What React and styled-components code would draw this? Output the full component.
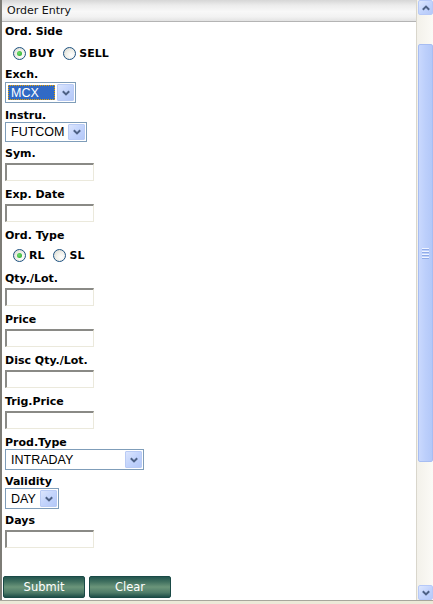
import React from "react";
import styled, { createGlobalStyle } from "styled-components";

const Global = createGlobalStyle`
  html, body { margin: 0; padding: 0; background: #fff; }
  body { font-family: "DejaVu Sans", Verdana, sans-serif; }
`;

const Frame = styled.div`
  width: 433px;
  height: 604px;
  display: flex;
  flex-direction: column;
  overflow: hidden;
  background: #ece9d8;
`;

const Body = styled.div`
  height: 600px;
  display: flex;
  flex-direction: row;
  border-bottom: 1px solid #a7a69c;
  background: #fff;
`;

const Panel = styled.div`
  flex: 1;
  display: flex;
  flex-direction: column;
  border-left: 2px solid #7d7c76;
  border-right: 1px solid #d9d6cc;
`;

const Header = styled.div`
  height: 21px;
  border-bottom: 1px solid #b4b4b4;
  background: linear-gradient(#d6d6d6 0%, #ececec 25%, #f8f8f8 55%, #f2f2f2 80%, #e3e3e3 100%);
  font-family: "DejaVu Sans", Verdana, sans-serif;
  font-size: 11px;
  line-height: 21px;
  color: #111;
  padding-left: 5px;
`;

const Form = styled.div`
  display: flex;
  flex-direction: column;
  align-items: flex-start;
  padding-left: 3px;
`;

const Label = styled.div`
  font-family: "DejaVu Sans", Verdana, sans-serif;
  font-weight: bold;
  font-size: 11px;
  line-height: 15px;
  height: 14px;
  color: #000;
  margin-top: ${(p) => p.$mt ?? 6}px;
`;

const RadioRow = styled.div`
  display: flex;
  align-items: center;
  height: 14px;
  margin-top: ${(p) => p.$mt ?? 8}px;
  padding-left: 8px;
  gap: 9px;
`;

const RadioItem = styled.div`
  display: flex;
  align-items: center;
  gap: 3px;
  font-family: "DejaVu Sans", Verdana, sans-serif;
  font-weight: bold;
  font-size: 11px;
  color: #000;
`;

const RadioCircle = styled.span`
  width: 11px;
  height: 11px;
  border-radius: 50%;
  border: 1px solid #1c5180;
  background: radial-gradient(circle at 65% 65%, #ffffff 0%, #f0f0ea 45%, #d4d4cc 100%);
  display: flex;
  align-items: center;
  justify-content: center;
`;

const RadioDot = styled.span`
  width: 5px;
  height: 5px;
  border-radius: 50%;
  background: radial-gradient(circle at 40% 40%, #6fe06f, #21a121);
`;

const Radio = ({ checked, children }) => (
  <RadioItem>
    <RadioCircle>{checked && <RadioDot />}</RadioCircle>
    {children}
  </RadioItem>
);

const SelectBox = styled.div`
  box-sizing: border-box;
  width: ${(p) => p.$w}px;
  height: ${(p) => p.$h ?? 21}px;
  margin-top: ${(p) => p.$mt ?? 0}px;
  border: 1px solid #7f9db9;
  background: #fff;
  display: flex;
  align-items: stretch;
  padding: 1px;
`;

const SelectValue = styled.div`
  flex: 1;
  display: flex;
  align-items: center;
  font-family: "Liberation Sans", Arial, sans-serif;
  font-size: 12.5px;
  color: ${(p) => (p.$focus ? "#fff" : "#000")};
  background: ${(p) => (p.$focus ? "#316ac5" : "transparent")};
  outline: ${(p) => (p.$focus ? "1px dotted #e8a200" : "none")};
  outline-offset: -1px;
  padding-left: ${(p) => (p.$focus ? 3 : 4)}px;
  margin: ${(p) => (p.$focus ? "1px 2px 1px 1px" : "0")};
`;

const DropButton = styled.div`
  width: 15px;
  border: 1px solid #b9cbf5;
  border-radius: 1px;
  background: linear-gradient(135deg, #dbe5fd 0%, #c3d4fc 50%, #b4c8f8 100%);
  display: flex;
  align-items: center;
  justify-content: center;
`;

const Chevron = ({ up }) => (
  <svg width="8" height="6" viewBox="0 0 8 6">
    <path
      d={up ? "M0.8 4.8 L4 1.6 L7.2 4.8" : "M0.8 1.2 L4 4.4 L7.2 1.2"}
      fill="none"
      stroke="#4d6185"
      strokeWidth="2"
    />
  </svg>
);

const Select = ({ value, w, h, mt, focus }) => (
  <SelectBox $w={w} $h={h} $mt={mt}>
    <SelectValue $focus={focus}>{value}</SelectValue>
    <DropButton>
      <Chevron />
    </DropButton>
  </SelectBox>
);

const TextInput = styled.div`
  box-sizing: border-box;
  width: 89px;
  height: 18px;
  margin-top: 3px;
  border-style: solid;
  border-width: 2px 1px 1px 2px;
  border-color: #8a8a86 #ebe9dc #ebe9dc #8a8a86;
  background: #fff;
`;

const ButtonRow = styled.div`
  display: flex;
  gap: 4px;
  margin-top: 28px;
  margin-left: -2px;
`;

const Button = styled.div`
  box-sizing: border-box;
  width: 82px;
  height: 22px;
  border: 1px solid #1a4a46;
  border-radius: 2px;
  background: linear-gradient(#245650 0%, #3e6e5e 22%, #6b957a 50%, #4d7b68 78%, #1f4f49 100%);
  color: #fff;
  font-family: "DejaVu Sans", Verdana, sans-serif;
  font-size: 11.5px;
  display: flex;
  align-items: center;
  justify-content: center;
`;

const Scrollbar = styled.div`
  width: 15px;
  display: flex;
  flex-direction: column;
  background: linear-gradient(90deg, #f3f1ea, #fbfaf6);
  padding-left: 1px;
`;

const ScrollButton = styled.div`
  box-sizing: border-box;
  height: ${(p) => p.$h}px;
  border: 1px solid #b6c9f8;
  border-radius: 2px;
  background: linear-gradient(135deg, #dde7fe 0%, #c2d3fc 55%, #b5c9f9 100%);
  display: flex;
  align-items: center;
  justify-content: center;
`;

const Gap = styled.div`
  height: ${(p) => p.$h}px;
  flex: ${(p) => (p.$grow ? 1 : "none")};
`;

const Thumb = styled.div`
  box-sizing: border-box;
  height: 418px;
  border: 1px solid #a7bdf2;
  border-radius: 2px;
  background: linear-gradient(90deg, #c9d8fd 0%, #bccffb 50%, #b3c8f8 100%);
  display: flex;
  flex-direction: column;
  align-items: center;
  justify-content: center;
  gap: 1px;
`;

const Grip = styled.span`
  width: 7px;
  height: 1px;
  background: #eef3ff;
  box-shadow: 0 1px 0 #8faae8;
  margin-bottom: 1px;
`;

export default function App() {
  return (
    <>
      <Global />
      <Frame>
        <Body>
          <Panel>
            <Header>Order Entry</Header>
            <Form>
              <Label $mt={2}>Ord. Side</Label>
              <RadioRow $mt={8}>
                <Radio checked>BUY</Radio>
                <Radio>SELL</Radio>
              </RadioRow>
              <Label $mt={7}>Exch.</Label>
              <Select value="MCX" w={71} h={21} mt={1} focus />
              <Label $mt={5}>Instru.</Label>
              <Select value="FUTCOM" w={82} h={20} mt={0} />
              <Label $mt={4}>Sym.</Label>
              <TextInput />
              <Label>Exp. Date</Label>
              <TextInput />
              <Label>Ord. Type</Label>
              <RadioRow $mt={6}>
                <Radio checked>RL</Radio>
                <Radio>SL</Radio>
              </RadioRow>
              <Label $mt={9}>Qty./Lot.</Label>
              <TextInput />
              <Label>Price</Label>
              <TextInput />
              <Label>Disc Qty./Lot.</Label>
              <TextInput />
              <Label>Trig.Price</Label>
              <TextInput />
              <Label>Prod.Type</Label>
              <Select value="INTRADAY" w={139} h={21} mt={0} />
              <Label $mt={4}>Validity</Label>
              <Select value="DAY" w={54} h={21} mt={0} />
              <Label $mt={4}>Days</Label>
              <TextInput />
              <ButtonRow>
                <Button>Submit</Button>
                <Button>Clear</Button>
              </ButtonRow>
            </Form>
          </Panel>
          <Scrollbar>
            <ScrollButton $h={15}>
              <Chevron up />
            </ScrollButton>
            <Gap $h={29} />
            <Thumb>
              <Grip />
              <Grip />
              <Grip />
              <Grip />
            </Thumb>
            <Gap $grow />
            <ScrollButton $h={15}>
              <Chevron />
            </ScrollButton>
          </Scrollbar>
        </Body>
      </Frame>
    </>
  );
}
